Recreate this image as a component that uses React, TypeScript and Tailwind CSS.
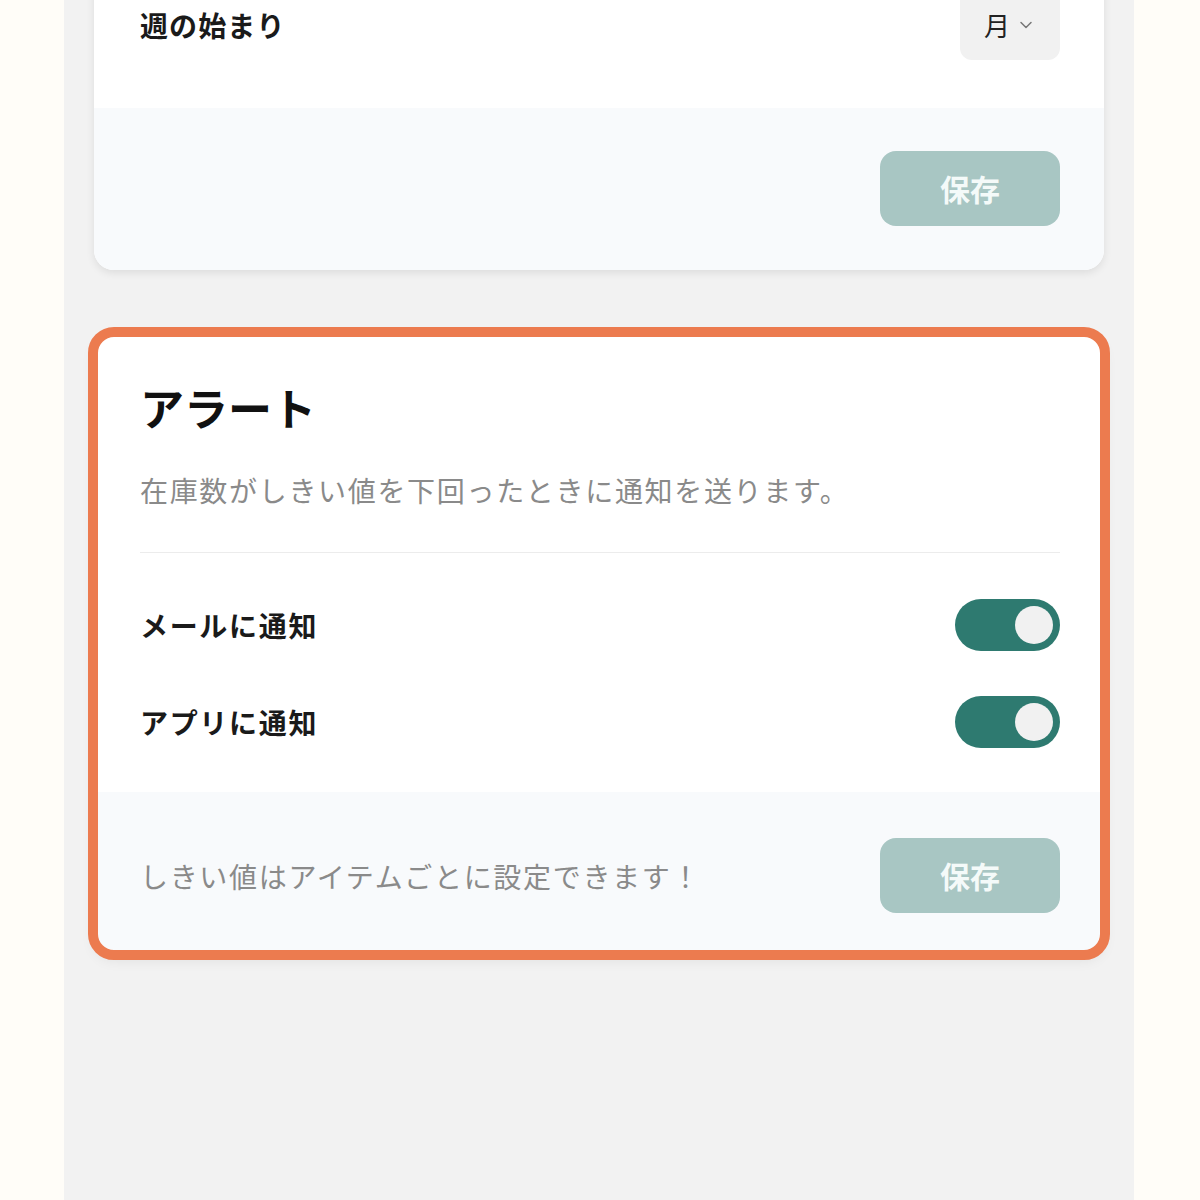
import React, { useState } from 'react';

const font = { fontFamily: '"Noto Sans CJK JP", "Noto Sans", sans-serif' };

const Toggle: React.FC<{ on: boolean; onChange: (v: boolean) => void }> = ({ on, onChange }) => (
  <button
    type="button"
    onClick={() => onChange(!on)}
    className={`flex h-[52px] w-[105px] items-center rounded-full px-[7px] ${on ? 'justify-end bg-[#2e7a70]' : 'justify-start bg-[#d4d4d4]'}`}
  >
    <span className="block h-[38px] w-[38px] rounded-full bg-[#f1f1f1]" />
  </button>
);

const SaveButton: React.FC = () => (
  <button
    type="button"
    className="h-[75px] w-[180px] rounded-[16px] bg-[#a8c6c3] text-[30px] font-bold text-[#f4faf9]"
  >
    保存
  </button>
);

export default function App() {
  const [mail, setMail] = useState(true);
  const [app, setApp] = useState(true);

  return (
    <div className="min-h-[1200px] bg-[#fffdf8]" style={font}>
      <div className="ml-[64px] h-[1200px] w-[1070px] overflow-hidden bg-[#f2f2f2] px-[30px]">
        {/* 週の始まり card */}
        <div className="mt-[-60px] overflow-hidden rounded-[20px] bg-white shadow-[0_3px_8px_rgba(0,0,0,0.09)]">
          <div className="flex items-start justify-between pl-[46px] pr-[44px] pt-[45px] pb-[48px]">
            <span className="mt-[20px] text-[28px] font-bold leading-[40px] tracking-[0.04em] text-[#1a1a1a]">週の始まり</span>
            <button
              type="button"
              className="flex h-[75px] w-[100px] items-center justify-center gap-[6px] rounded-[12px] bg-[#f1f1f1] pt-[4px] text-[26px] text-[#222]"
            >
              月
              <svg width="20" height="20" viewBox="0 0 24 24" fill="none" stroke="#777" strokeWidth="1.8" strokeLinecap="round" strokeLinejoin="round">
                <path d="m6 9 6 6 6-6" />
              </svg>
            </button>
          </div>
          <div className="flex justify-end bg-[#f8fafc] px-[44px] pt-[43px] pb-[44px]">
            <SaveButton />
          </div>
        </div>

        {/* アラート card */}
        <div className="mt-[63px] overflow-hidden rounded-[20px] bg-white shadow-[0_6px_14px_rgba(0,0,0,0.08)] outline-solid outline-[10px] outline-[#ec7b4f] outline-offset-[-4px]">
          <div className="pl-[46px] pr-[44px] pt-[46px]">
            <h2 className="text-[44px] font-bold leading-[56px] text-[#111]">アラート</h2>
            <p className="mt-[35px] text-[28px] leading-[40px] tracking-[0.06em] text-[#8a8a8a]">
              在庫数がしきい値を下回ったときに通知を送ります。
            </p>
            <div className="mt-[42px] h-px bg-[#ececec]" />
            <div className="flex flex-col gap-[45px] pt-[46px] pb-[44px]">
              <div className="flex items-center justify-between">
                <span className="text-[28px] font-bold tracking-[0.06em] text-[#1a1a1a]">メールに通知</span>
                <Toggle on={mail} onChange={setMail} />
              </div>
              <div className="flex items-center justify-between">
                <span className="text-[28px] font-bold tracking-[0.06em] text-[#1a1a1a]">アプリに通知</span>
                <Toggle on={app} onChange={setApp} />
              </div>
            </div>
          </div>
          <div className="flex items-center justify-between bg-[#f8fafc] pr-[44px] pl-[46px] pt-[46px] pb-[41px]">
            <span className="text-[28px] tracking-[0.06em] text-[#8a8a8a]">しきい値はアイテムごとに設定できます！</span>
            <SaveButton />
          </div>
        </div>
      </div>
    </div>
  );
}
